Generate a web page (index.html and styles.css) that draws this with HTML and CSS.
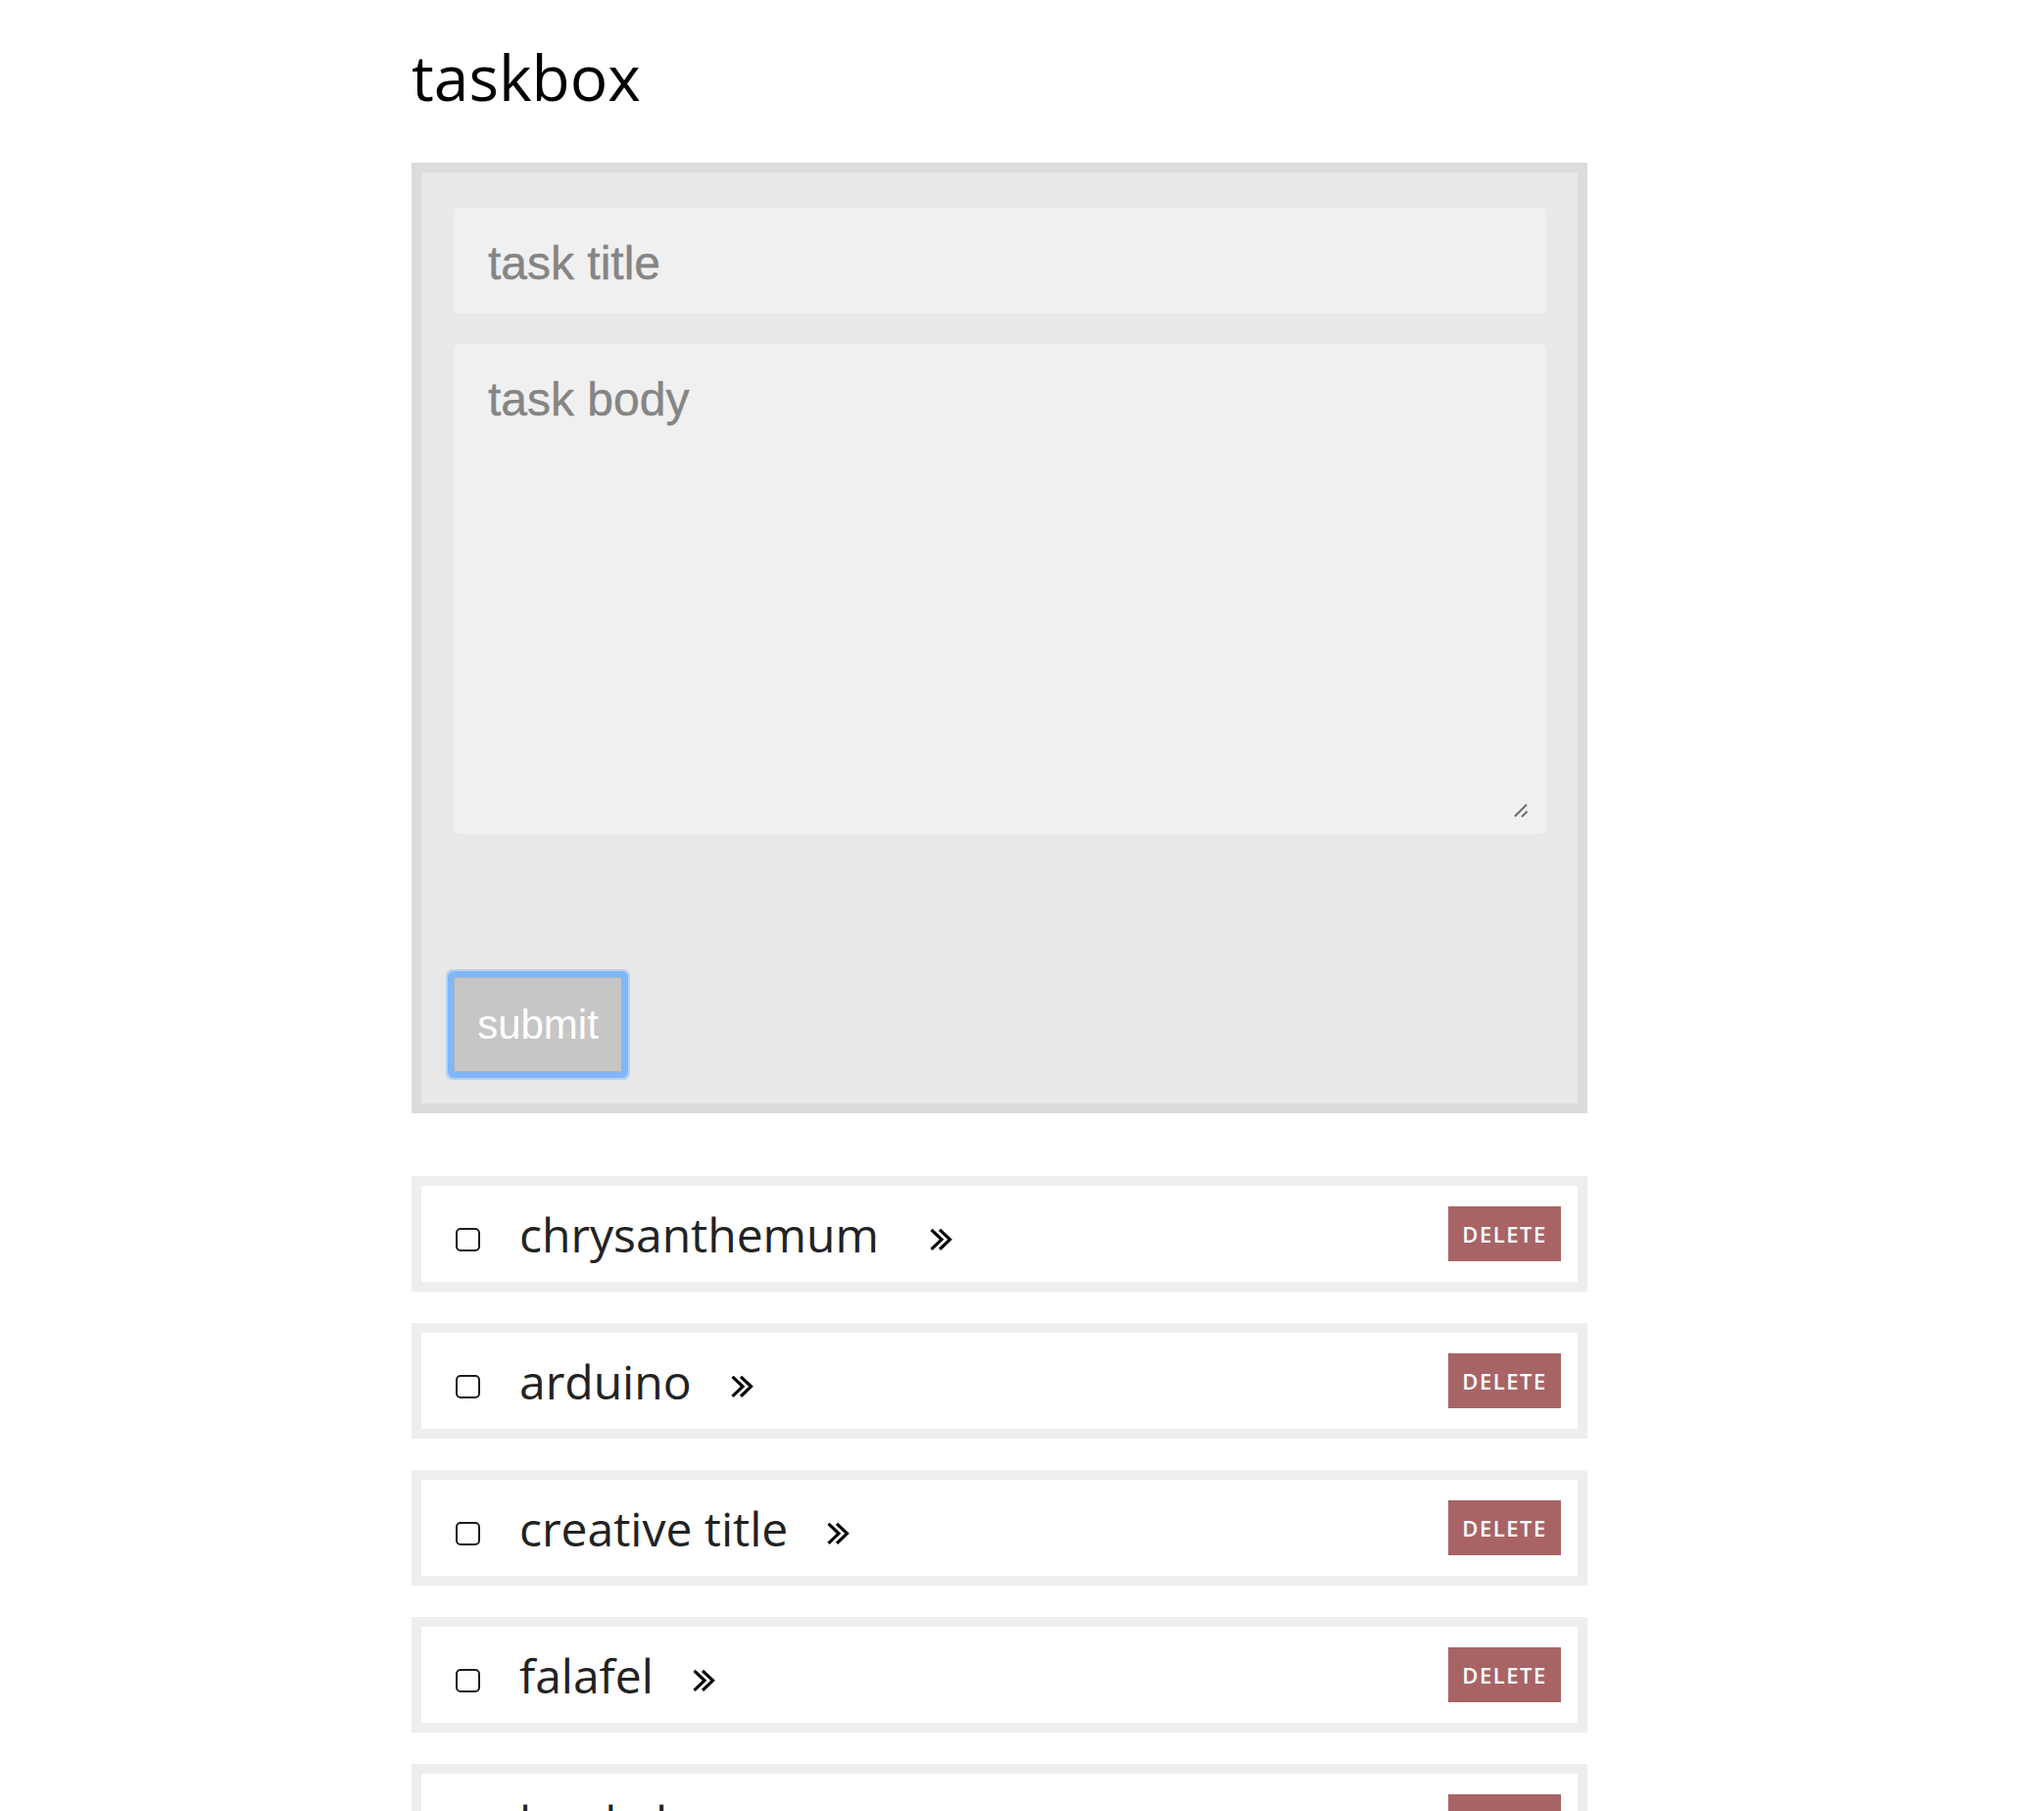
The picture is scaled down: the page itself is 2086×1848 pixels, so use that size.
FILE: index.html
```html
<!DOCTYPE html>
<html lang="en">
<head>
<meta charset="utf-8">
<title>taskbox</title>
<link rel="stylesheet" href="styles.css">
</head>
<body>
<div class="app">
  <h1 class="brand">taskbox</h1>
  <form class="composer">
    <input class="field field-title" type="text" placeholder="task title">
    <div class="body-wrap">
      <textarea class="field field-body" placeholder="task body"></textarea>
      <svg class="grip" viewBox="0 0 14 14" width="14" height="14"><line x1="1" y1="13" x2="13" y2="1"/><line x1="8" y1="13.5" x2="13.5" y2="8"/></svg>
    </div>
    <button class="submit" type="button">submit</button>
  </form>
  <ul class="tasks">
    <li class="task">
      <span class="check"></span>
      <span class="task-name">chrysanthemum&nbsp;</span>
      <svg class="more" viewBox="0 0 24 24" width="24" height="24"><polyline points="1.5,1.8 12,11.8 1.5,21.8"/><polyline points="10,1.8 20.5,11.8 10,21.8"/></svg>
      <button class="delete" type="button">DELETE</button>
    </li>
    <li class="task">
      <span class="check"></span>
      <span class="task-name">arduino</span>
      <svg class="more" viewBox="0 0 24 24" width="24" height="24"><polyline points="1.5,1.8 12,11.8 1.5,21.8"/><polyline points="10,1.8 20.5,11.8 10,21.8"/></svg>
      <button class="delete" type="button">DELETE</button>
    </li>
    <li class="task">
      <span class="check"></span>
      <span class="task-name">creative title</span>
      <svg class="more" viewBox="0 0 24 24" width="24" height="24"><polyline points="1.5,1.8 12,11.8 1.5,21.8"/><polyline points="10,1.8 20.5,11.8 10,21.8"/></svg>
      <button class="delete" type="button">DELETE</button>
    </li>
    <li class="task">
      <span class="check"></span>
      <span class="task-name">falafel</span>
      <svg class="more" viewBox="0 0 24 24" width="24" height="24"><polyline points="1.5,1.8 12,11.8 1.5,21.8"/><polyline points="10,1.8 20.5,11.8 10,21.8"/></svg>
      <button class="delete" type="button">DELETE</button>
    </li>
    <li class="task">
      <span class="check"></span>
      <span class="task-name">hookah</span>
      <svg class="more" viewBox="0 0 24 24" width="24" height="24"><polyline points="1.5,1.8 12,11.8 1.5,21.8"/><polyline points="10,1.8 20.5,11.8 10,21.8"/></svg>
      <button class="delete" type="button">DELETE</button>
    </li>
  </ul>
</div>
</body>
</html>
```
FILE: styles.css
```css
html, body {
  margin: 0;
  padding: 0;
  background: #ffffff;
}

.app {
  margin-left: 420px;
  width: 1200px;
  padding-top: 35px;
  padding-bottom: 40px;
}

.brand {
  margin: 0 0 43px;
  font-family: "Open Sans", sans-serif;
  font-weight: 400;
  font-size: 64px;
  line-height: 88px;
  color: #000000;
}

.composer {
  display: flex;
  flex-direction: column;
  align-items: flex-start;
  margin: 0;
  border: 10px solid #dcdcdc;
  background: #e8e8e8;
  padding: 36px 32px 32px 33px;
}

.field {
  box-sizing: border-box;
  width: 100%;
  margin: 0;
  border: 0;
  border-radius: 5px;
  background: #f0f0f0;
  font-family: "Liberation Sans", Arial, sans-serif;
  font-size: 48px;
  color: #222222;
  outline: none;
  -webkit-text-stroke: 0.4px #858585;
}

.field::placeholder {
  color: #858585;
  opacity: 1;
}

.field-title {
  height: 108px;
  padding: 5px 35px 0;
}

.body-wrap {
  position: relative;
  width: 100%;
  margin-top: 31px;
  display: flex;
}

.field-body {
  display: block;
  height: 500px;
  padding: 29px 35px;
  line-height: normal;
  resize: none;
}

.grip {
  position: absolute;
  right: 19px;
  bottom: 17px;
  fill: none;
  stroke: #6a6a6a;
  stroke-width: 2;
}

.submit {
  box-sizing: border-box;
  width: 172px;
  height: 97px;
  margin-top: 146px;
  padding: 0;
  border: 1px solid #a8b3bf;
  border-radius: 2px;
  background: #c6c6c6;
  color: #ffffff;
  font-family: "Liberation Sans", Arial, sans-serif;
  font-size: 42px;
  box-shadow: 0 0 0 6px #80b7f7, 0 0 0 8px rgba(128, 183, 247, 0.45);
}

.tasks {
  list-style: none;
  margin: 64px 0 0;
  padding: 0;
  display: flex;
  flex-direction: column;
  gap: 32px;
}

.task {
  box-sizing: border-box;
  height: 118px;
  border: 10px solid #eeeeee;
  background: #ffffff;
  display: flex;
  align-items: center;
  padding: 0 17px 0 35px;
}

.check {
  flex: none;
  box-sizing: border-box;
  width: 25px;
  height: 24px;
  margin-top: 12px;
  border: 2.2px solid #1c1c1c;
  border-radius: 5px;
}

.task-name {
  margin-left: 40px;
  font-family: "Open Sans", sans-serif;
  font-size: 48px;
  line-height: normal;
  color: #222222;
  white-space: pre;
}

.more {
  flex: none;
  margin-left: 40px;
  margin-top: 12px;
  fill: none;
  stroke: #000000;
  stroke-width: 3.2;
  stroke-linejoin: miter;
}

.delete {
  flex: none;
  margin-left: auto;
  width: 115px;
  height: 56px;
  padding: 0;
  border: 0;
  background: #a86464;
  color: #ffffff;
  font-family: "Open Sans", sans-serif;
  font-weight: 600;
  font-size: 22px;
  letter-spacing: 1.5px;
}
```
